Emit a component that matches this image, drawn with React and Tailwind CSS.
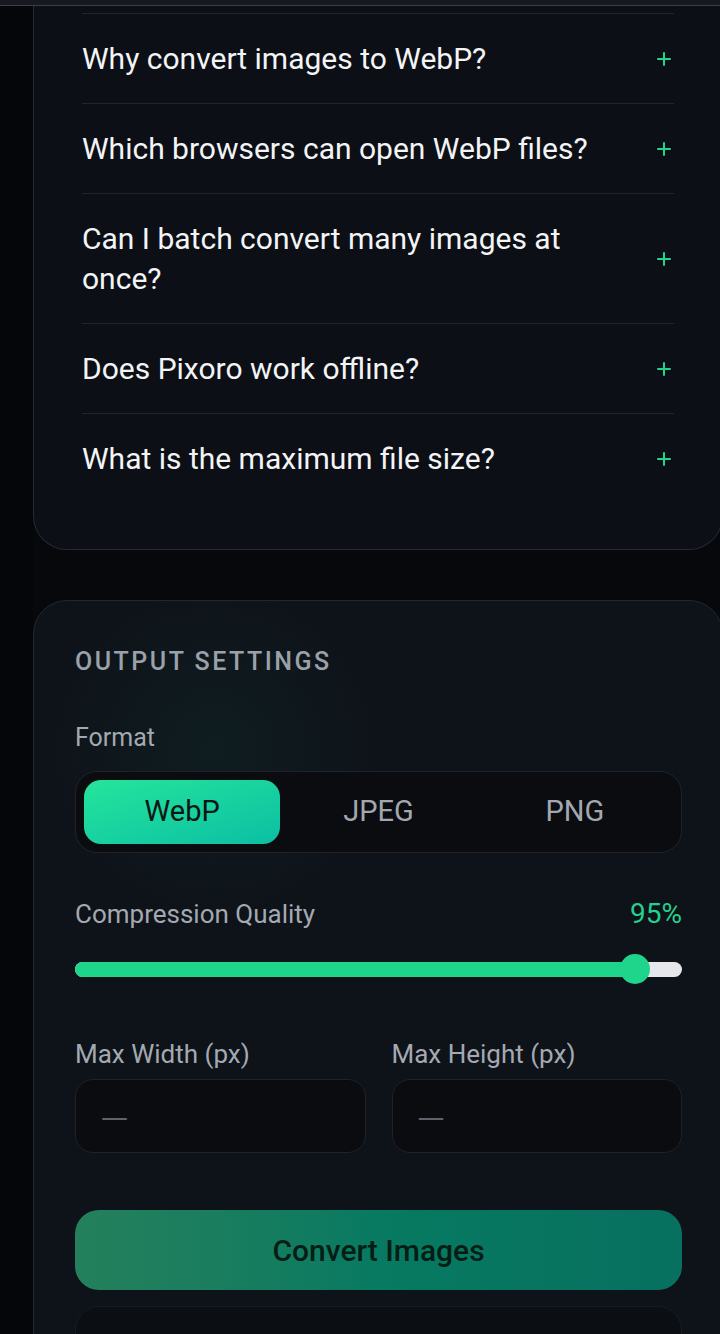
import React from "react";

const faqs = [
  "Why convert images to WebP?",
  "Which browsers can open WebP files?",
  "Can I batch convert many images at once?",
  "Does Pixoro work offline?",
  "What is the maximum file size?",
];

function Plus() {
  return (
    <svg width="14" height="14" viewBox="0 0 14 14" className="shrink-0 mr-[3px]">
      <path d="M7 1v12M1 7h12" stroke="#22d38c" strokeWidth="2" strokeLinecap="round" />
    </svg>
  );
}

function Dash() {
  return (
    <span className="text-[27px] leading-none text-[#5f646c]" style={{ fontFamily: "'DejaVu Sans', sans-serif" }}>
      —
    </span>
  );
}

export default function App() {
  return (
    <div
      className="w-[720px] h-[1334px] overflow-hidden bg-[#06080c] text-white"
      style={{ fontFamily: "Roboto, 'Noto Sans', sans-serif" }}
    >
      <div className="h-[6px] bg-[#161a20] border-b border-[#3a3f47]" />
      <div className="flex">
        <div className="w-[33px] shrink-0 bg-[#04060a]" />
        <div className="flex flex-col w-[690px] shrink-0">
          {/* FAQ card */}
          <div className="bg-[#0c0f15] border-x border-b border-[#262a31] rounded-b-[34px] px-[48px] pt-[7px] pb-[46px]">
            {faqs.map((q) => (
              <div
                key={q}
                className="flex items-center justify-between gap-6 border-t border-[#20242b] pt-[25px] pb-[24px]"
              >
                <span className="text-[30px] leading-[40px] text-[#f3f4f6] max-w-[525px]">{q}</span>
                <Plus />
              </div>
            ))}
          </div>

          {/* Output settings card */}
          <div className="mt-[50px] bg-[#0e1219] border border-[#23272e] rounded-t-[34px] pl-[41px] pr-[40px] pt-[44px] pb-[40px] bg-[radial-gradient(circle_at_180px_150px,rgba(34,211,140,0.06),transparent_180px)]">
            <div className="text-[25px] leading-[34px] font-medium tracking-[0.1em] text-[#9ba1aa]">
              OUTPUT SETTINGS
            </div>
            <div className="mt-[44px] text-[25px] leading-[30px] text-[#a4a9b1]">Format</div>
            <div className="mt-[18px] grid grid-cols-3 p-[8px] rounded-[22px] bg-[#0a0c10] border border-[#20242a]">
              <div className="h-[64px] rounded-[17px] bg-gradient-to-br from-[#24e59b] to-[#0bbfa3] flex items-center justify-center text-[29px] text-[#0a1712]">
                WebP
              </div>
              <div className="h-[64px] flex items-center justify-center text-[29px] text-[#a3a8b0]">JPEG</div>
              <div className="h-[64px] flex items-center justify-center text-[29px] text-[#a3a8b0]">PNG</div>
            </div>

            <div className="mt-[45px] flex items-center justify-between">
              <span className="text-[26px] leading-[32px] text-[#a4a9b1]">Compression Quality</span>
              <span className="text-[28px] leading-[32px] text-[#24d08d]">95%</span>
            </div>
            <div className="relative mt-[24px] h-[30px] flex items-center">
              <div className="w-full h-[15px] rounded-full bg-[#e6e7ea] overflow-hidden">
                <div className="h-full bg-[#1fd48b]" style={{ width: "92.3%" }} />
              </div>
              <div
                className="absolute top-0 w-[30px] h-[30px] rounded-full bg-[#1fd48b]"
                style={{ left: "calc(92.3% - 15px)" }}
              />
            </div>

            <div className="mt-[54px] grid grid-cols-2 gap-[26px]">
              <div>
                <div className="text-[26px] leading-[32px] text-[#a4a9b1]">Max Width (px)</div>
                <div className="mt-[9px] h-[74px] rounded-[18px] bg-[#0a0c10] border border-[#1f2329] flex items-center px-[25px]">
                  <Dash />
                </div>
              </div>
              <div>
                <div className="text-[26px] leading-[32px] text-[#a4a9b1]">Max Height (px)</div>
                <div className="mt-[9px] h-[74px] rounded-[18px] bg-[#0a0c10] border border-[#1f2329] flex items-center px-[25px]">
                  <Dash />
                </div>
              </div>
            </div>

            <button className="mt-[57px] w-full h-[80px] rounded-[24px] bg-gradient-to-r from-[#24805c] via-[#077a61] to-[#07705f] flex items-center justify-center text-[30px] font-medium text-[#061d16]">
              Convert Images
            </button>
            <div className="mt-[16px] h-[80px] rounded-[24px] border border-[#181c22] bg-[#0b0e13]" />
          </div>
        </div>
      </div>
    </div>
  );
}
